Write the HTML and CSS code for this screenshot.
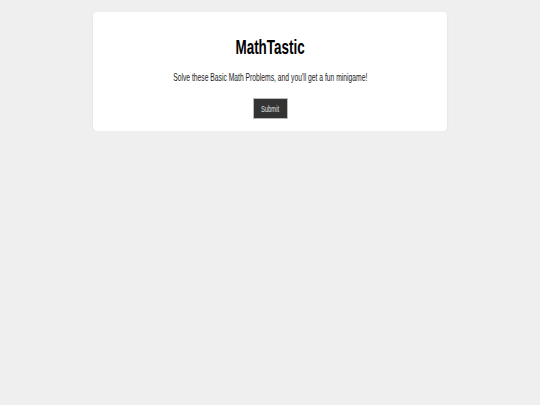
FILE: index.html
```html
<!DOCTYPE html>
<html>
<head>
<meta charset="utf-8">
<link rel="stylesheet" href="styles.css">
</head>
<body>
<div class="card">
  <h1 class="title"><span class="narrow">MathTastic</span></h1>
  <p class="lead"><span class="narrow">Solve these Basic Math Problems, and you'll get a fun minigame!</span></p>
  <button class="submit"><span class="narrow">Submit</span></button>
</div>
</body>
</html>
```
FILE: styles.css
```css
html, body {
  margin: 0;
  padding: 0;
  background: #efefef;
  font-family: "Liberation Sans", Arial, sans-serif;
}
body {
  padding-top: 12px;
}
.card {
  width: 354px;
  box-sizing: border-box;
  margin: 0 auto;
  background: #fff;
  border-radius: 4px;
  box-shadow: 0 1px 3px rgba(0,0,0,0.07);
  display: flex;
  flex-direction: column;
  align-items: center;
  padding: 23px 0 12px;
}
.narrow {
  display: inline-block;
  white-space: nowrap;
  transform: scaleX(0.65);
}
.title {
  margin: 0;
  font-size: 21px;
  font-weight: bold;
  color: #000;
  line-height: 24px;
}
.title .narrow {
  transform: scaleX(0.64);
}
.lead {
  margin: 11px 0 0;
  font-size: 10.8px;
  line-height: 14px;
  color: #1a1a1a;
}
.lead .narrow {
  transform: scaleX(0.625);
}
.submit {
  margin-top: 14px;
  width: 35px;
  height: 21px;
  padding: 0;
  border: 1px solid #bbb;
  background: #333;
  color: #e0e0e0;
  font-family: inherit;
  font-size: 9px;
  display: flex;
  align-items: center;
  justify-content: center;
  overflow: visible;
}
```
